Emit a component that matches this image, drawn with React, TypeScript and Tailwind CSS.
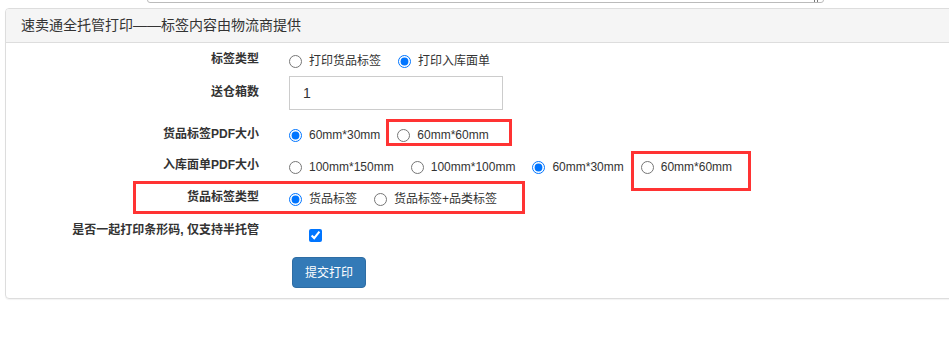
import React from "react";

const font = "font-['Liberation_Sans','Noto_Sans_CJK_SC',sans-serif]";

function Radio({ name, label, checked }: { name: string; label: string; checked?: boolean }) {
  return (
    <label className="flex items-center">
      <input
        type="radio"
        name={name}
        defaultChecked={checked}
        className="m-0 w-[13px] h-[13px]"
      />
      <span className="ml-[7px] text-[12px] text-[#333]">{label}</span>
    </label>
  );
}

function Row({ label, className, labelClass, children }: { label: string; className: string; labelClass?: string; children: React.ReactNode }) {
  return (
    <div className={"flex items-center " + className}>
      <div className={"w-[253px] text-right text-[12px] font-bold text-[#333] " + (labelClass ?? "mb-[5px]")}>{label}</div>
      <div className="ml-[30px] flex items-center gap-x-[17px]">{children}</div>
    </div>
  );
}

export default function App() {
  return (
    <div className={"w-[949px] h-[341px] overflow-hidden bg-white " + font}>
      {/* textarea edge cut off at the top */}
      <div className="relative ml-[147px] w-[677px] h-[33px] -mt-[30px] border border-[#bbb] rounded-[3px]">
        <div className="absolute right-[5px] bottom-0 flex gap-[2px]">
          <div className="w-px h-[2px] bg-[#777]" />
          <div className="w-px h-[2px] bg-[#777]" />
        </div>
      </div>

      <div className="relative ml-[5px] mt-[5px] w-[980px] border border-[#ddd] rounded-[4px] shadow-[0_1px_1px_rgba(0,0,0,0.05)]">
        <div className="h-[34px] bg-[#f5f5f5] border-b border-[#ddd] rounded-t-[3px] flex items-center pl-[15px] text-[14px] text-[#333]">
          速卖通全托管打印——标签内容由物流商提供
        </div>

        <div className="pt-[5px] pb-[10px]">
          <Row label="标签类型" className="h-[26px]">
            <Radio name="t" label="打印货品标签" />
            <Radio name="t" label="打印入库面单" checked />
          </Row>

          <Row label="送仓箱数" className="mt-[2px] h-[34px]" labelClass="mb-[2px]">
            <div className="w-[214px] h-[34px] border border-[#ccc] flex items-center pl-[13px] text-[14px] text-[#333]">1</div>
          </Row>

          <Row label="货品标签PDF大小" className="mt-[12px] h-[26px]" labelClass="mb-[2px]">
            <Radio name="g" label="60mm*30mm" checked />
            <Radio name="g" label="60mm*60mm" />
          </Row>

          <Row label="入库面单PDF大小" className="mt-[6px] h-[26px]" labelClass="mb-[4px]">
            <Radio name="r" label="100mm*150mm" />
            <Radio name="r" label="100mm*100mm" />
            <Radio name="r" label="60mm*30mm" checked />
            <Radio name="r" label="60mm*60mm" />
          </Row>

          <Row label="货品标签类型" className="mt-[6px] h-[26px]" labelClass="mb-[4px]">
            <Radio name="k" label="货品标签" checked />
            <Radio name="k" label="货品标签+品类标签" />
          </Row>

          <Row label="是否一起打印条形码, 仅支持半托管" className="mt-[10px] h-[26px]" labelClass="mb-[10px]">
            <input type="checkbox" defaultChecked className="m-0 ml-[20px] w-[13px] h-[13px]" />
          </Row>

          <div className="mt-[9px] ml-[286px]">
            <button className="h-[31px] w-[74px] rounded-[4px] bg-[#337ab7] border border-[#2e6da4] text-white text-[12px]">
              提交打印
            </button>
          </div>
        </div>

        {/* red annotation boxes */}
        <div className="absolute left-[380px] top-[110px] w-[126px] h-[27px] border-[3px] border-[#ff3333]" />
        <div className="absolute left-[625px] top-[142px] w-[120px] h-[40px] border-[3px] border-[#ff3333]" />
        <div className="absolute left-[127px] top-[172px] w-[392px] h-[33px] border-[3px] border-[#ff3333]" />
      </div>
    </div>
  );
}
